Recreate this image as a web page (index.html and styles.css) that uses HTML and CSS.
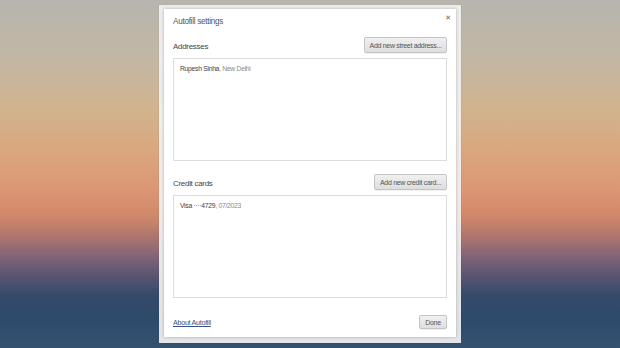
FILE: index.html
```html
<!DOCTYPE html>
<html>
<head>
<meta charset="utf-8">
<link rel="stylesheet" href="styles.css">
</head>
<body>
<div class="stage">
  <div class="frame">
    <div class="dialog">
      <div class="header">
        <div class="title">Autofill settings</div>
        <div class="close">&#x2715;</div>
      </div>
      <div class="section-row first">
        <div class="section-label">Addresses</div>
        <button class="btn btn-address">Add new street address...</button>
      </div>
      <div class="list">
        <div class="item"><span class="primary">Rupesh Sinha</span><span class="secondary">, New Delhi</span></div>
      </div>
      <div class="section-row second">
        <div class="section-label">Credit cards</div>
        <button class="btn btn-card">Add new credit card...</button>
      </div>
      <div class="list">
        <div class="item"><span class="primary">Visa ····4729</span><span class="secondary">, 07/2023</span></div>
      </div>
      <div class="footer">
        <a class="link" href="#">About Autofill</a>
        <button class="btn btn-done">Done</button>
      </div>
    </div>
  </div>
</div>
</body>
</html>
```
FILE: styles.css
```css
html, body {
  margin: 0;
  padding: 0;
}
body {
  width: 620px;
  height: 348px;
  overflow: hidden;
  font-family: "Liberation Sans", Arial, sans-serif;
  background: linear-gradient(to bottom,
    #b7b5ae 0px,
    #c2b7a3 60px,
    #d1b38e 110px,
    #daa77e 150px,
    #dc9672 190px,
    #d1886b 215px,
    #b0776c 235px,
    #846577 255px,
    #5b5571 275px,
    #364a6a 295px,
    #2d4a6c 320px,
    #355370 348px);
}
.stage {
  display: flex;
  justify-content: center;
  padding-top: 5px;
}
.frame {
  width: 292px;
  padding: 4px 5px 6px 5px;
  background: rgba(242, 242, 242, 0.92);
  box-shadow: 0 0 1px rgba(0,0,0,0.2);
}
.dialog {
  background: #fff;
  box-shadow: 0 0 3px rgba(0,0,0,0.25);
  padding: 6px 9px 8px 9px;
  height: 314px;
  display: flex;
  flex-direction: column;
}
.header {
  display: flex;
  justify-content: space-between;
  align-items: flex-start;
}
.title {
  font-size: 8.2px;
  letter-spacing: -0.3px;
  line-height: 13px;
  color: #555;
}
.close {
  font-size: 7px;
  line-height: 8px;
  color: #666;
  font-weight: bold;
  margin-top: -1px;
  margin-right: -4px;
  font-family: "DejaVu Sans", sans-serif;
}
.section-row {
  display: flex;
  justify-content: space-between;
  align-items: center;
  height: 16px;
}
.section-row.first { margin-top: 9px; }
.section-row.second { margin-top: 13px; }
.section-label {
  font-size: 8px;
  letter-spacing: -0.3px;
  color: #444;
  padding-top: 2px;
}
.btn {
  font-family: inherit;
  font-size: 7px;
  letter-spacing: -0.3px;
  color: #555;
  background: linear-gradient(to bottom, #f0f0f0, #dedede);
  border: 1px solid #c4c4c4;
  border-radius: 2px;
  box-shadow: 0 1px 0 rgba(0,0,0,0.06);
  padding: 0;
  height: 16px;
  margin: 0;
  white-space: nowrap;
}
.btn-address { width: 83px; }
.btn-card { width: 73px; }
.btn-done { width: 28px; height: 14px; }
.list {
  margin-top: 5px;
  border: 1px solid #dcdcdc;
  padding: 4px 6px;
  box-sizing: border-box;
  height: 103px;
}
.item {
  font-size: 6.8px;
  letter-spacing: -0.3px;
  line-height: 11px;
}
.primary { color: #444; }
.secondary { color: #8a8a8a; }
.footer {
  margin-top: auto;
  display: flex;
  justify-content: space-between;
  align-items: center;
}
.link {
  font-size: 7.2px;
  letter-spacing: -0.3px;
  color: #3a4f86;
  text-decoration: underline;
}
```
